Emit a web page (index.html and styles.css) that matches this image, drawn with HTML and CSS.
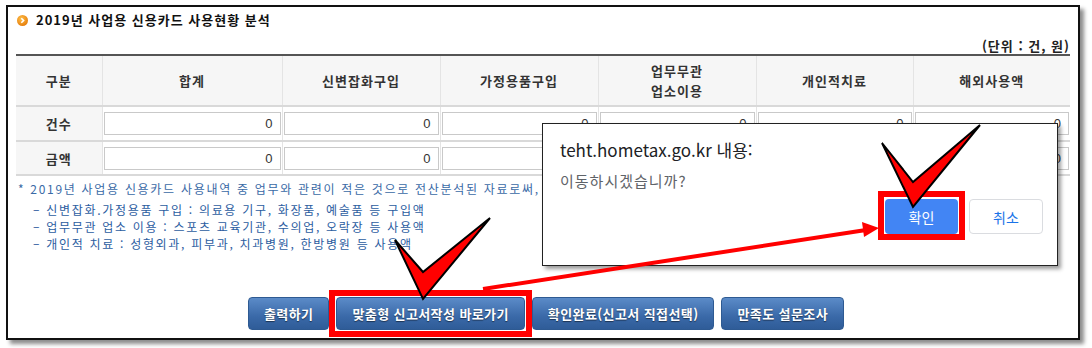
FILE: index.html
```html
<!DOCTYPE html>
<html lang="ko">
<head>
    <meta charset="UTF-8">
    <meta name="viewport" content="width=device-width, initial-scale=1.0">
    <title>2019년 사업용 신용카드 사용현황 분석</title>
    <link rel="stylesheet" href="styles.css">
</head>
<body>

<div class="frame">
    <h2 class="title">
        <svg class="bullet" width="11" height="11" viewBox="0 0 11 11">
            <defs>
                <radialGradient id="orb" cx="40%" cy="35%" r="70%">
                    <stop offset="0" stop-color="#ffc04a"/>
                    <stop offset="1" stop-color="#e47a08"/>
                </radialGradient>
            </defs>
            <circle cx="5.5" cy="5.5" r="5.5" fill="url(#orb)"/>
            <path d="M4.3 3.2 L6.6 5.5 L4.3 7.8" fill="none" stroke="#fff" stroke-width="1.6"/>
        </svg>
        2019년 사업용 신용카드 사용현황 분석
    </h2>

    <div class="unit">(단위 : 건, 원)</div>

    <table class="stat">
        <colgroup>
            <col class="col-label">
            <col class="col-sum">
            <col class="col-item">
            <col class="col-item">
            <col class="col-item">
            <col class="col-last">
            <col class="col-last">
        </colgroup>
        <thead>
            <tr>
                <th>구분</th>
                <th>합계</th>
                <th>신변잡화구입</th>
                <th>가정용품구입</th>
                <th>업무무관<br>업소이용</th>
                <th>개인적치료</th>
                <th>해외사용액</th>
            </tr>
        </thead>
        <tbody>
            <tr>
                <th>건수</th>
                <td><input class="num" type="text" value="0" readonly></td>
                <td><input class="num" type="text" value="0" readonly></td>
                <td><input class="num" type="text" value="0" readonly></td>
                <td><input class="num" type="text" value="0" readonly></td>
                <td><input class="num" type="text" value="0" readonly></td>
                <td><input class="num" type="text" value="0" readonly></td>
            </tr>
            <tr>
                <th>금액</th>
                <td><input class="num" type="text" value="0" readonly></td>
                <td><input class="num" type="text" value="0" readonly></td>
                <td><input class="num" type="text" value="0" readonly></td>
                <td><input class="num" type="text" value="0" readonly></td>
                <td><input class="num" type="text" value="0" readonly></td>
                <td><input class="num" type="text" value="0" readonly></td>
            </tr>
        </tbody>
    </table>

    <div class="notes">
        <p class="note-lead">* 2019년 사업용 신용카드 사용내역 중 업무와 관련이 적은 것으로 전산분석된 자료로써,</p>
        <p class="note-item">– 신변잡화.가정용품 구입 : 의료용 기구, 화장품, 예술품 등 구입액</p>
        <p class="note-item">– 업무무관 업소 이용 : 스포츠 교육기관, 수의업, 오락장 등 사용액</p>
        <p class="note-item">– 개인적 치료 : 성형외과, 피부과, 치과병원, 한방병원 등 사용액</p>
    </div>

    <div class="actions">
        <button class="btn">출력하기</button>
        <button class="btn marked">맞춤형 신고서작성 바로가기</button>
        <button class="btn">확인완료(신고서 직접선택)</button>
        <button class="btn">만족도 설문조사</button>
    </div>
</div>

<div class="dialog">
    <div class="dialog-title">teht.hometax.go.kr 내용:</div>
    <div class="dialog-msg">이동하시겠습니까?</div>
    <div class="dialog-actions">
        <button class="dlg-btn dlg-ok marked">확인</button>
        <button class="dlg-btn dlg-cancel">취소</button>
    </div>
</div>

<!-- annotation marks drawn over the screenshot -->
<svg class="marks" width="1092" height="348" viewBox="0 0 1092 348">
    <line x1="483" y1="289" x2="866" y2="230" stroke="#f00" stroke-width="4"/>
    <polygon points="879,228 864,237 862,222" fill="#f00"/>
    <polygon points="395,240 423,272 490,218 423,299" fill="#f00" stroke="#000" stroke-width="2" stroke-linejoin="miter"/>
    <polygon points="882,143 913,182 980,125 913,207" fill="#f00" stroke="#000" stroke-width="2" stroke-linejoin="miter"/>
</svg>

</body>
</html>
```

FILE: styles.css
```css
body {
    margin: 0;
    width: 1092px;
    height: 348px;
    overflow: hidden;
    position: relative;
    background-color: #fff;
    font-family: "Noto Sans CJK KR", "Noto Sans", sans-serif;
    color: #333;
}

.frame {
    box-sizing: border-box;
    width: 1074px;
    height: 335px;
    margin: 5px 0 0 6px;
    padding: 4px 8px 0;
    border: 2px solid #111;
    box-shadow: 4px 4px 4px rgba(0, 0, 0, 0.45);
    background-color: #fff;
}

.title {
    display: flex;
    align-items: center;
    gap: 8px;
    margin: 0;
    font-size: 13px;
    font-weight: 700;
    line-height: 18px;
    letter-spacing: 1px;
    color: #111;
}

.bullet {
    margin-left: 1px;
}

.unit {
    margin-top: 9px;
    text-align: right;
    font-size: 13px;
    font-weight: 700;
    line-height: 16px;
    letter-spacing: 1px;
    color: #222;
}

/* stats table */
.stat {
    width: 1054px;
    table-layout: fixed;
    border-collapse: collapse;
    border-top: 2px solid #555;
}

.col-label { width: 86px; }
.col-sum { width: 180px; }
.col-item { width: 158px; }
.col-last { width: 157px; }

.stat th,
.stat td {
    padding: 0;
    border-bottom: 2px solid #d9d9d9;
    border-left: 1px solid #e4e4e4;
    font-size: 13px;
}

.stat th:first-child {
    border-left: none;
}

.stat th {
    letter-spacing: 1px;
}

.stat thead th {
    height: 49px;
    background-color: #f6f6f6;
    font-weight: 700;
    line-height: 20px;
    color: #333;
}

.stat tbody th {
    height: 33px;
    background-color: #f6f6f6;
    font-weight: 700;
    color: #333;
}

.stat tbody tr + tr th,
.stat tbody tr + tr td {
    height: 32px;
}

.stat td {
    background-color: #fff;
}

.num {
    box-sizing: border-box;
    display: block;
    width: calc(100% - 2px);
    height: 23px;
    margin: 0 1px;
    padding: 0 7px;
    border: 1px solid #c9c9c9;
    text-align: right;
    font-family: "Liberation Sans", sans-serif;
    font-size: 13px;
    color: #333;
    background-color: #fff;
}

/* notes under the table */
.notes {
    margin-top: 4px;
    padding-left: 2px;
    font-size: 12px;
    line-height: 17px;
    letter-spacing: 1.7px;
    color: #2c5d9f;
    white-space: nowrap;
}

.notes p {
    margin: 0;
}

.note-lead {
    margin-bottom: 4px !important;
    color: #3a6aa6;
}

.note-item {
    padding-left: 15px;
}

/* bottom buttons */
.actions {
    display: flex;
    justify-content: center;
    gap: 7px;
    margin-top: 45px;
    padding-left: 6px;
}

.btn {
    height: 33px;
    padding: 0 15px;
    border: 1px solid #2e5a92;
    border-radius: 4px;
    background: linear-gradient(#5b8bc8, #3a69a8 60%, #2f5c98);
    color: #fff;
    font-family: inherit;
    font-size: 13px;
    font-weight: 700;
    letter-spacing: 0.4px;
    text-shadow: 0 1px 1px rgba(0, 0, 0, 0.5);
    cursor: pointer;
}

/* red highlight box around a clicked button */
.marked {
    position: relative;
}

.marked::after {
    content: "";
    position: absolute;
    left: -8px;
    top: -8px;
    right: -8px;
    bottom: -8px;
    border: 6px solid #f00;
}

.dlg-ok.marked::after {
    left: -7px;
    top: -8px;
    right: -7px;
    bottom: -6px;
}

/* browser confirm dialog */
.dialog {
    position: absolute;
    left: 542px;
    top: 123px;
    box-sizing: border-box;
    width: 516px;
    height: 143px;
    padding: 14px 14px 0 17px;
    border: 1px solid #222;
    background-color: #fff;
    box-shadow: 3px 3px 4px rgba(0, 0, 0, 0.4);
}

.dialog-title {
    font-size: 17px;
    line-height: 24px;
    color: #202124;
}

.dialog-msg {
    margin-top: 9px;
    font-size: 15px;
    line-height: 20px;
    letter-spacing: 1px;
    color: #5f6368;
}

.dialog-actions {
    display: flex;
    justify-content: flex-end;
    gap: 11px;
    margin-top: 8px;
}

.dlg-btn {
    box-sizing: border-box;
    width: 73px;
    height: 35px;
    border-radius: 4px;
    font-family: inherit;
    font-size: 14px;
    cursor: pointer;
}

.dlg-ok {
    border: none;
    background-color: #4285f4;
    color: #fff;
}

.dlg-cancel {
    width: 74px;
    border: 1px solid #dadce0;
    background-color: #fff;
    color: #1a73e8;
}

.marks {
    position: absolute;
    left: 0;
    top: 0;
    pointer-events: none;
}
```
